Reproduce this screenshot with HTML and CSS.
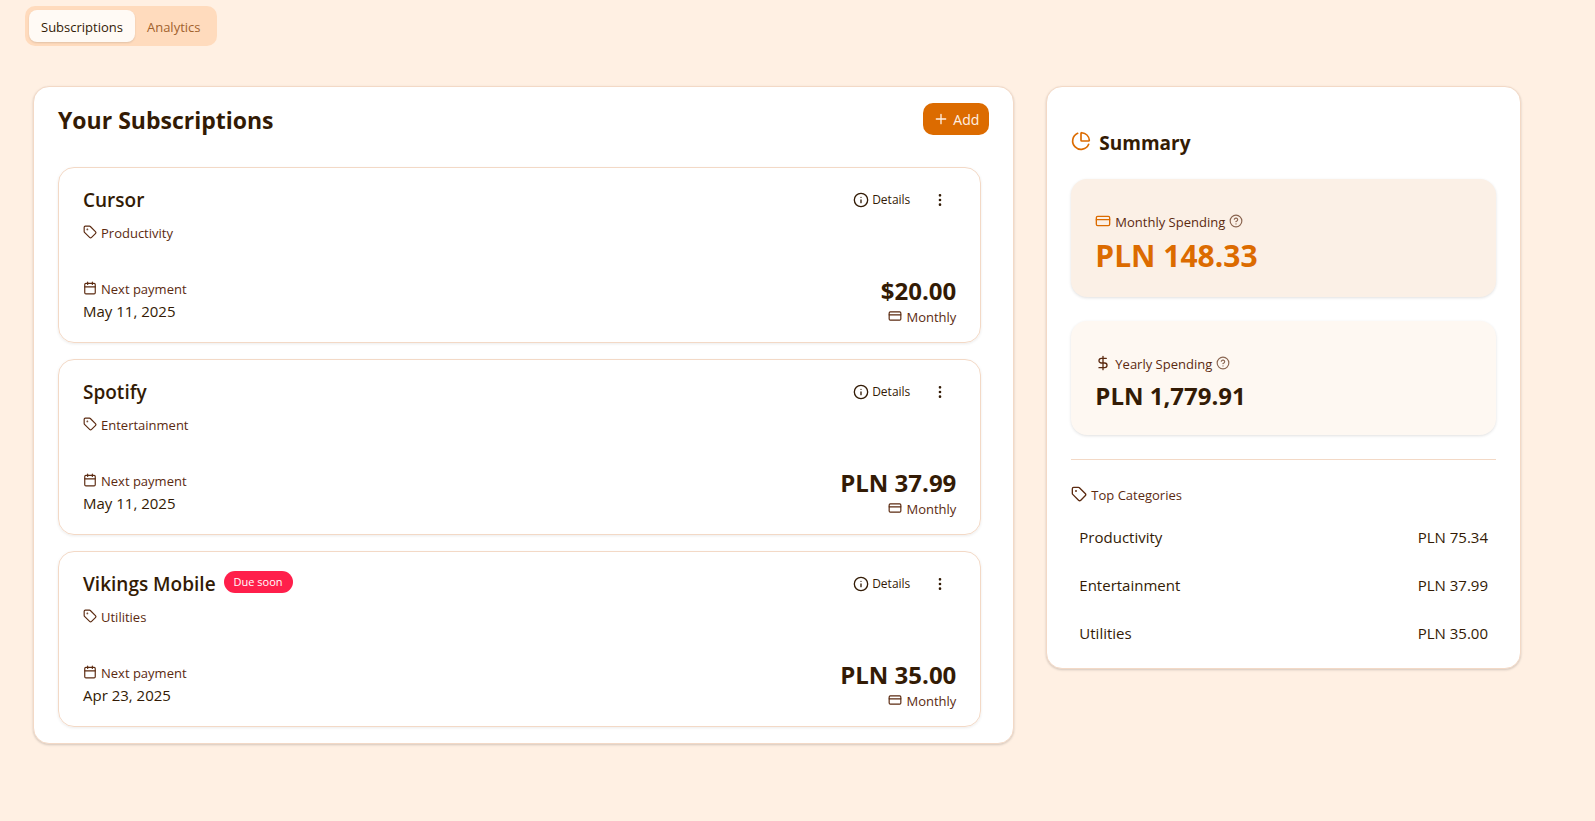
FILE: index.html
```html
<!DOCTYPE html>
<html lang="en">
<head>
<meta charset="utf-8">
<meta name="viewport" content="width=device-width, initial-scale=1">
<title>Subscriptions</title>
<link rel="stylesheet" href="styles.css">
</head>
<body>
<svg class="sprite" aria-hidden="true">
  <symbol id="tag" viewBox="0 0 24 24"><path d="M12.586 2.586A2 2 0 0 0 11.172 2H4a2 2 0 0 0-2 2v7.172a2 2 0 0 0 .586 1.414l8.704 8.704a2.426 2.426 0 0 0 3.42 0l6.58-6.58a2.426 2.426 0 0 0 0-3.42z"/><circle cx="7.5" cy="7.5" r=".5" fill="currentColor"/></symbol>
  <symbol id="calendar" viewBox="0 0 24 24"><path d="M8 2v4M16 2v4M3 10h18"/><rect width="18" height="18" x="3" y="4" rx="2"/></symbol>
  <symbol id="card" viewBox="0 0 24 24"><rect width="20" height="14" x="2" y="5" rx="2"/><path d="M2 10h20"/></symbol>
  <symbol id="info" viewBox="0 0 24 24"><circle cx="12" cy="12" r="10"/><path d="M12 16v-4M12 8h.01"/></symbol>
  <symbol id="more" viewBox="0 0 24 24"><circle cx="12" cy="12" r="1"/><circle cx="12" cy="5" r="1"/><circle cx="12" cy="19" r="1"/></symbol>
  <symbol id="plus" viewBox="0 0 24 24"><path d="M5 12h14M12 5v14"/></symbol>
  <symbol id="pie" viewBox="0 0 24 24"><path d="M21 12c.552 0 1.005-.449.95-.998a10 10 0 0 0-8.953-8.951c-.55-.055-.998.398-.998.95v8a1 1 0 0 0 1 1z"/><path d="M21.21 15.89A10 10 0 1 1 8 2.83"/></symbol>
  <symbol id="help" viewBox="0 0 24 24"><circle cx="12" cy="12" r="10"/><path d="M9.09 9a3 3 0 0 1 5.83 1c0 2-3 3-3 3M12 17h.01"/></symbol>
  <symbol id="dollar" viewBox="0 0 24 24"><path d="M12 2v20M17 5H9.5a3.5 3.5 0 0 0 0 7h5a3.5 3.5 0 0 1 0 7H6"/></symbol>
</svg>

<nav class="tabs" role="tablist">
  <button class="tab tab-active" type="button" role="tab" aria-selected="true">Subscriptions</button>
  <button class="tab" type="button" role="tab" aria-selected="false">Analytics</button>
</nav>

<main class="layout">
  <section class="panel subscriptions">
    <header class="panel-header">
      <h1 class="title">Your Subscriptions</h1>
      <button class="add" type="button"><svg class="icon icon-md"><use href="#plus"/></svg>Add</button>
    </header>
    <div class="list">
      <article class="item">
        <div class="item-top">
          <div>
            <div class="name-row"><h2 class="name">Cursor</h2></div>
            <p class="meta"><svg class="icon"><use href="#tag"/></svg>Productivity</p>
          </div>
          <div class="actions">
            <button class="details" type="button"><svg class="icon icon-md"><use href="#info"/></svg>Details</button>
            <button class="more" type="button" aria-label="More actions"><svg class="icon icon-md"><use href="#more"/></svg></button>
          </div>
        </div>
        <div class="item-bottom">
          <div>
            <p class="meta"><svg class="icon"><use href="#calendar"/></svg>Next payment</p>
            <p class="date">May 11, 2025</p>
          </div>
          <div class="cost">
            <p class="price">$20.00</p>
            <p class="meta"><svg class="icon"><use href="#card"/></svg>Monthly</p>
          </div>
        </div>
      </article>
      <article class="item">
        <div class="item-top">
          <div>
            <div class="name-row"><h2 class="name">Spotify</h2></div>
            <p class="meta"><svg class="icon"><use href="#tag"/></svg>Entertainment</p>
          </div>
          <div class="actions">
            <button class="details" type="button"><svg class="icon icon-md"><use href="#info"/></svg>Details</button>
            <button class="more" type="button" aria-label="More actions"><svg class="icon icon-md"><use href="#more"/></svg></button>
          </div>
        </div>
        <div class="item-bottom">
          <div>
            <p class="meta"><svg class="icon"><use href="#calendar"/></svg>Next payment</p>
            <p class="date">May 11, 2025</p>
          </div>
          <div class="cost">
            <p class="price">PLN 37.99</p>
            <p class="meta"><svg class="icon"><use href="#card"/></svg>Monthly</p>
          </div>
        </div>
      </article>
      <article class="item">
        <div class="item-top">
          <div>
            <div class="name-row"><h2 class="name">Vikings Mobile</h2><span class="badge">Due soon</span></div>
            <p class="meta"><svg class="icon"><use href="#tag"/></svg>Utilities</p>
          </div>
          <div class="actions">
            <button class="details" type="button"><svg class="icon icon-md"><use href="#info"/></svg>Details</button>
            <button class="more" type="button" aria-label="More actions"><svg class="icon icon-md"><use href="#more"/></svg></button>
          </div>
        </div>
        <div class="item-bottom">
          <div>
            <p class="meta"><svg class="icon"><use href="#calendar"/></svg>Next payment</p>
            <p class="date">Apr 23, 2025</p>
          </div>
          <div class="cost">
            <p class="price">PLN 35.00</p>
            <p class="meta"><svg class="icon"><use href="#card"/></svg>Monthly</p>
          </div>
        </div>
      </article>
    </div>
  </section>

  <aside class="panel summary">
    <h2 class="summary-title"><svg class="icon icon-lg"><use href="#pie"/></svg>Summary</h2>
    <div class="stat stat-monthly">
      <p class="meta"><svg class="icon icon-md accent"><use href="#card"/></svg>Monthly Spending<svg class="icon faded"><use href="#help"/></svg></p>
      <p class="stat-value stat-value-lg">PLN 148.33</p>
    </div>
    <div class="stat">
      <p class="meta"><svg class="icon icon-md"><use href="#dollar"/></svg>Yearly Spending<svg class="icon faded"><use href="#help"/></svg></p>
      <p class="stat-value">PLN 1,779.91</p>
    </div>
    <div class="categories">
      <h3 class="meta"><svg class="icon icon-md"><use href="#tag"/></svg>Top Categories</h3>
      <dl class="category-list">
        <div class="category"><dt>Productivity</dt><dd>PLN 75.34</dd></div>
        <div class="category"><dt>Entertainment</dt><dd>PLN 37.99</dd></div>
        <div class="category"><dt>Utilities</dt><dd>PLN 35.00</dd></div>
      </dl>
    </div>
  </aside>
</main>
</body>
</html>
```
FILE: styles.css
```css
* { box-sizing: border-box; margin: 0; padding: 0; }

body {
  padding: 6px 25px 40px;
  background: #fff0e3;
  color: #331b05;
  font-family: "Segoe UI", "Open Sans", "Noto Sans", sans-serif;
  font-size: 15px;
  line-height: 24px;
}

button { border: 0; background: none; color: inherit; font: inherit; cursor: pointer; }

.sprite { position: absolute; width: 0; height: 0; }

.icon {
  flex: none;
  width: 14px;
  height: 14px;
  fill: none;
  stroke: currentColor;
  stroke-width: 2;
  stroke-linecap: round;
  stroke-linejoin: round;
}
.icon-md { width: 16px; height: 16px; }
.icon-lg { width: 20px; height: 20px; margin-bottom: 4px; color: #dc6b00; }
.accent { color: #dc6b00; }
.faded { opacity: 0.7; }

.tabs {
  display: inline-flex;
  padding: 4px;
  border-radius: 10px;
  background: #ffdbbd;
}
.tab {
  padding: 7px 12px 5px;
  border-radius: 8px;
  color: #a2622d;
  font-size: 13px;
  line-height: 20px;
}
.tab-active {
  background: #fffaf5;
  color: #331b05;
  box-shadow: 0 1px 2px rgb(0 0 0 / 12%);
}

.layout {
  display: grid;
  grid-template-columns: repeat(3, minmax(0, 1fr));
  align-items: start;
  gap: 32px;
  margin: 40px 49px 0 8px;
}
.subscriptions { grid-column: span 2; }

.panel {
  border: 1px solid #f3d9c6;
  border-radius: 16px;
  background: #fff;
  box-shadow: 0 1px 3px rgb(0 0 0 / 10%), 0 1px 2px rgb(0 0 0 / 8%);
}
.subscriptions { padding: 16px 24px; }

.panel-header {
  display: flex;
  align-items: center;
  justify-content: space-between;
  margin-bottom: 32px;
}
.title { padding-top: 2px; font-size: 23px; line-height: 30px; font-weight: 700; }
.add {
  display: flex;
  align-items: center;
  gap: 4px;
  padding: 7px 10px 5px;
  border-radius: 10px;
  background: #dc6b00;
  color: #fff0e3;
  font-size: 14px;
  line-height: 20px;
}
.add .icon { margin-bottom: 2px; }

.list { display: grid; gap: 16px; padding-right: 8px; }
.item {
  padding: 16px 24px 15px;
  border: 1px solid #f3d9c6;
  border-radius: 16px;
  box-shadow: 0 1px 3px rgb(0 0 0 / 8%);
}
.item-top, .item-bottom { display: flex; justify-content: space-between; }
.item-bottom { align-items: center; margin-top: 32px; }
.name-row { display: flex; align-items: center; gap: 8px; }
.name { font-size: 19px; line-height: 32px; font-weight: 600; }
.badge {
  margin-bottom: 4px;
  padding: 3px 10px;
  border-radius: 11px;
  background: #ff1f4b;
  color: #fff;
  font-size: 11px;
  line-height: 16px;
}
.meta {
  display: flex;
  align-items: center;
  gap: 4px;
  color: #5b2a10;
  font-size: 13px;
  line-height: 20px;
  font-weight: 400;
}
.meta .icon { margin-bottom: 2px; }
.name-row + .meta { margin-top: 7px; }
.actions { display: flex; align-items: center; align-self: flex-start; gap: 4px; }
.details {
  display: flex;
  align-items: center;
  gap: 3px;
  padding: 6px 10px;
  font-size: 12px;
  line-height: 20px;
}
.more { display: flex; padding: 8px; }
.cost { display: grid; justify-items: end; }
.price { font-size: 24px; line-height: 32px; font-weight: 700; }

.summary { padding: 40px 24px 15px; }
.summary-title {
  display: flex;
  align-items: center;
  gap: 8px;
  margin-bottom: 20px;
  font-size: 19px;
  line-height: 32px;
}
.stat {
  margin-bottom: 24px;
  padding: 33px 24px 20px;
  border-radius: 16px;
  background: #fef8f2;
  box-shadow: 0 1px 3px rgb(0 0 0 / 12%);
}
.stat-monthly { background: #fbf0e6; }
.stat-value { margin-top: 3px; font-size: 24px; line-height: 38px; font-weight: 700; }
.stat-value-lg { color: #dc6b00; font-size: 30px; line-height: 42px; }
.categories { padding-top: 25px; border-top: 1px solid #f3d9c6; }
.category-list { display: grid; gap: 8px; margin-top: 12px; }
.category { display: flex; justify-content: space-between; padding: 8px; }
```
